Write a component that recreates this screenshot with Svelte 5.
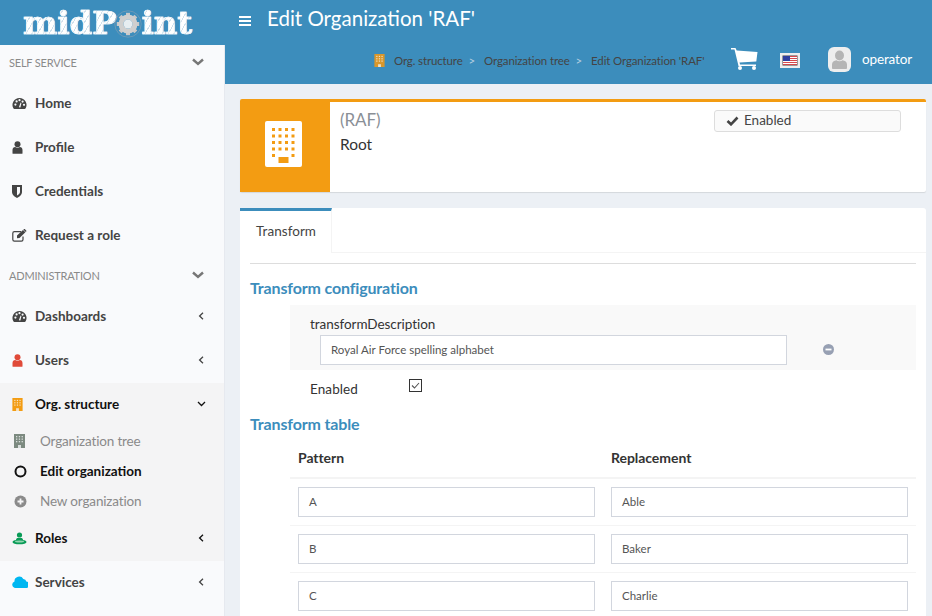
<script>
	const rows = [
		['A', 'Able'],
		['B', 'Baker'],
		['C', 'Charlie']
	];
	const teeth = [0, 45, 90, 135, 180, 225, 270, 315];
</script>

{#snippet chevronLeft()}
	<svg class="chev" width="6" height="8" viewBox="0 0 6 8"><path d="M5 .8 1.600 4 5 7.200" fill="none" stroke="currentColor" stroke-width="1.300"/></svg>
{/snippet}

{#snippet sectionChevron()}
	<svg class="section-chev" width="12" height="8" viewBox="0 0 12 8"><path d="m1 1.500 5 4.500 5-4.500" fill="none" stroke="currentColor" stroke-width="2.400"/></svg>
{/snippet}

{#snippet gauge(c)}
	<svg width="15" height="13" viewBox="0 0 15 13"><path fill={c} d="M7.500 1a7 7 0 0 0-6 10.600c.2.300.5.400.8.400h10.400c.3 0 .6-.1.8-.4A7 7 0 0 0 7.500 1z"/><g fill="#f9fafc"><circle cx="3.400" cy="7.600" r="1.100"/><circle cx="4.600" cy="4.400" r="1.100"/><circle cx="7.500" cy="3.200" r="1.100"/><circle cx="10.600" cy="4.600" r="1.100"/><circle cx="12" cy="7.800" r="1.100"/><path d="M6.900 10.200 8.600 5.600l.8.300-1 4.600z"/></g></svg>
{/snippet}

{#snippet person(c)}
	<svg width="11" height="13" viewBox="0 0 11 13"><circle cx="5.500" cy="3.200" r="3" fill={c}/><path fill={c} d="M.5 12.200V9c0-1.800 1.200-3 2.600-3 .7.500 1.500.8 2.400.8S7.200 6.500 7.900 6c1.400 0 2.600 1.200 2.600 3v3.200c0 .3-.3.6-.6.6H1.100c-.3 0-.6-.3-.6-.6z"/></svg>
{/snippet}

{#snippet building(c, w, h)}
	<svg width={w} height={h} viewBox="0 0 11 14"><rect width="11" height="14" fill={c}/><g fill="#f9fafc" opacity=".75"><rect x="2" y="2" width="1.300" height="1.300"/><rect x="4.800" y="2" width="1.300" height="1.300"/><rect x="7.600" y="2" width="1.300" height="1.300"/><rect x="2" y="4.500" width="1.300" height="1.300"/><rect x="4.800" y="4.500" width="1.300" height="1.300"/><rect x="7.600" y="4.500" width="1.300" height="1.300"/><rect x="2" y="7" width="1.300" height="1.300"/><rect x="4.800" y="7" width="1.300" height="1.300"/><rect x="7.600" y="7" width="1.300" height="1.300"/><rect x="4" y="11" width="3" height="3"/></g></svg>
{/snippet}

<div class="page">
	<header class="header">
		<div class="top">
			<div class="logo">
				<span class="logo-text">midP</span>
				<svg class="gear" width="28" height="28" viewBox="0 0 28 28">
					<circle cx="14" cy="14" r="13.200" fill="none" stroke="#7f9fb6" stroke-width=".7"/>
					{#each teeth as a}
						<rect x="12" y="2.800" width="4" height="4" fill="#c9c9c9" transform="rotate({a} 14 14)"/>
					{/each}
					<circle cx="14" cy="14" r="7" fill="none" stroke="#cfcfcf" stroke-width="5"/>
					<circle cx="14" cy="14" r="4.500" fill="#e6edf1"/>
				</svg>
				<span class="logo-text">int</span>
			</div>
			<span class="burger"><i></i><i></i><i></i></span>
			<h1>Edit Organization 'RAF'</h1>
		</div>
		<div class="sub">
			<nav class="crumbs">
				<span class="crumb-icon">{@render building('#d9972a', 11, 13)}</span>
				<span>Org. structure</span><b>&gt;</b>
				<span>Organization tree</span><b>&gt;</b>
				<span>Edit Organization 'RAF'</span>
			</nav>
			<svg class="cart" width="27" height="22" viewBox="0 0 27 22"><path fill="#fff" d="M0 0h4.500l1.200 2.500L26.500 4l-1.200 9.500L8.500 14.500l.6 2h15.900v1.500H7.500L3.500 1.500H0z"/><circle cx="9" cy="20" r="2" fill="#fff"/><circle cx="23" cy="20" r="2" fill="#fff"/></svg>
			<svg class="flag" width="20" height="15" viewBox="0 0 20 15"><rect width="20" height="15" fill="#eee"/><rect x="2.500" y="2.500" width="15" height="10" fill="#444"/><rect x="3" y="3" width="14" height="9" fill="#fff"/><path stroke="#d5484c" stroke-width="1" d="M3 3.500h14M3 5.500h14M3 7.500h14M3 9.500h14M3 11.500h14"/><rect x="3" y="3" width="7" height="5" fill="#2f3f9f"/></svg>
			<span class="avatar">
				<svg width="23" height="25" viewBox="0 0 23 25"><rect width="23" height="25" rx="6" fill="#eee"/><ellipse cx="11.500" cy="8.500" rx="4.500" ry="5" fill="#b5b5b5"/><path fill="#b5b5b5" d="M4 21v-3.500c0-2.500 2-4 4.500-4.200 1.800 1.200 4.200 1.200 6 0 2.500.2 4.500 1.700 4.500 4.200V21c0 .5-.4 1-1 1H5c-.6 0-1-.5-1-1z"/></svg>
			</span>
			<span class="user">operator</span>
		</div>
	</header>

	<div class="body">
		<aside class="sidebar">
			<div class="section"><span>SELF SERVICE</span>{@render sectionChevron()}</div>
			<a class="item"><span class="ic">{@render gauge('#444')}</span>Home</a>
			<a class="item"><span class="ic">{@render person('#444')}</span>Profile</a>
			<a class="item"><span class="ic"><svg width="10" height="13" viewBox="0 0 10 13"><path fill="#444" d="M0 0h10v7c0 3-3 5-5 6-2-1-5-3-5-6z"/><path fill="#f9fafc" d="M5 2h3v5c0 1.500-1.500 2.700-3 3.500z"/></svg></span>Credentials</a>
			<a class="item"><span class="ic"><svg width="15" height="13" viewBox="0 0 15 13"><path fill="none" stroke="#444" stroke-width="1.200" d="M9 2.600H2.400C1.400 2.600.8 3.200.8 4.200v6.400c0 1 .6 1.600 1.600 1.600h7c1 0 1.600-.6 1.600-1.600V7.500"/><path fill="#444" d="M5 6.500 11 .9l2.400 2.300L7.500 9 5 9.300zM11.800.3c.4-.4.900-.4 1.200 0l1.200 1.100c.3.300.3.800 0 1.100l-.4.400L11.400.7z"/></svg></span>Request a role</a>
			<div class="section"><span>ADMINISTRATION</span>{@render sectionChevron()}</div>
			<a class="item"><span class="ic">{@render gauge('#444')}</span>Dashboards{@render chevronLeft()}</a>
			<a class="item"><span class="ic">{@render person('#e04a39')}</span>Users{@render chevronLeft()}</a>
			<div class="group">
				<a class="item active"><span class="ic">{@render building('#f39c12', 11, 13)}</span>Org. structure
					<svg class="chev down" width="9" height="6" viewBox="0 0 9 6"><path d="m1 1 3.500 3.500L8 1" fill="none" stroke="currentColor" stroke-width="1.300"/></svg>
				</a>
				<a class="subitem"><span class="ic-sub">{@render building('#7c8a80', 11, 14)}</span>Organization tree</a>
				<a class="subitem current"><span class="ic-sub"><svg width="13" height="13" viewBox="0 0 13 13"><circle cx="6.500" cy="6.500" r="5" fill="none" stroke="#111" stroke-width="2"/></svg></span>Edit organization</a>
				<a class="subitem"><span class="ic-sub"><svg width="13" height="13" viewBox="0 0 13 13"><circle cx="6.500" cy="6.500" r="6" fill="#8a8a8a"/><path d="M6.500 3.500v6M3.500 6.500h6" stroke="#f4f4f5" stroke-width="1.800"/></svg></span>New organization</a>
				<a class="item active"><span class="ic"><svg width="15" height="13" viewBox="0 0 15 13"><circle cx="7.500" cy="3" r="2.600" fill="#0a9b57"/><path fill="#0a9b57" d="M4 10V7.800C4 6.500 5 6 6 6h3c1 0 2 .5 2 1.800V10z"/><ellipse cx="7.500" cy="10" rx="7" ry="2.300" fill="#0a9b57"/><ellipse cx="7.500" cy="9.600" rx="4.500" ry="1" fill="#8fd4ae"/></svg></span>Roles{@render chevronLeft()}</a>
			</div>
			<a class="item"><span class="ic"><svg width="16" height="12" viewBox="0 0 16 12"><path fill="#00b7f1" d="M3.500 12a3.400 3.400 0 0 1-1-6.600 4.700 4.700 0 0 1 8.800-2.500 3 3 0 0 1 3 2.500 3.300 3.300 0 0 1-1.300 6.600z"/></svg></span>Services{@render chevronLeft()}</a>
		</aside>

		<main class="main">
			<section class="summary">
				<div class="summary-icon">
					<svg width="37" height="46" viewBox="0 0 37 46">
						<rect width="37" height="46" rx="2" fill="#fff"/>
						<g fill="#f39c12">
							{#each [0, 1, 2, 3] as r}
								{#each [0, 1, 2, 3] as c}
									<rect x={7 + c * 6.500} y={7 + r * 6.500} width="3" height="3"/>
								{/each}
							{/each}
							<rect x="7" y="33" width="3" height="3"/>
							<rect x="26.500" y="33" width="3" height="3"/>
							<rect x="13.500" y="36" width="10" height="6"/>
						</g>
					</svg>
				</div>
				<div class="summary-text">
					<div class="raf">(RAF)</div>
					<div class="root">Root</div>
				</div>
				<div class="status"><svg width="13" height="10" viewBox="0 0 13 10"><path d="m1.500 5 3.500 3.300 6.500-6.800" fill="none" stroke="#444" stroke-width="2.600"/></svg><span>Enabled</span></div>
			</section>

			<section class="tabs-box">
				<div class="tabs">
					<div class="tab">Transform</div>
					<div class="tab-rest"></div>
				</div>
				<div class="content">
					<h2 class="title-config">Transform configuration</h2>
					<div class="panel">
						<div class="panel-label">transformDescription</div>
						<div class="panel-row">
							<div class="input wide"><span>Royal Air Force spelling alphabet</span></div>
							<svg class="minus" width="11" height="11" viewBox="0 0 11 11"><circle cx="5.500" cy="5.500" r="5.500" fill="#97a0b3"/><rect x="2.500" y="4.600" width="6" height="1.800" fill="#fff"/></svg>
						</div>
					</div>
					<div class="enabled">
						<span class="enabled-label">Enabled</span>
						<span class="check"><svg width="13" height="13" viewBox="0 0 13 13"><rect x=".5" y=".5" width="12" height="12" fill="#fff" stroke="#333"/><path d="m3 6.500 2.500 2.500 4.500-5" fill="none" stroke="#555" stroke-width="1.100"/></svg></span>
					</div>
					<h2>Transform table</h2>
					<div class="table">
						<div class="thead"><div>Pattern</div><div>Replacement</div></div>
						{#each rows as [pattern, replacement]}
							<div class="tr">
								<div class="input"><span>{pattern}</span></div>
								<div class="input"><span>{replacement}</span></div>
							</div>
						{/each}
					</div>
				</div>
			</section>
		</main>
	</div>
</div>

<style>
	:global(body) {
		margin: 0;
		background: #ecf0f5;
	}

	.page {
		width: 932px;
		height: 616px;
		overflow: hidden;
		font-family: Lato, "Liberation Sans", sans-serif;
		font-size: 13.5px;
		letter-spacing: -0.05px;
		color: #333;
		display: flex;
		flex-direction: column;
	}

	.header {
		background: #3c8dbc;
		height: 84px;
		flex: none;
	}

	.top {
		height: 45px;
		display: flex;
		align-items: center;
	}

	.logo {
		width: 224px;
		height: 45px;
		padding-left: 23px;
		box-sizing: border-box;
		display: flex;
		align-items: center;
		flex: none;
	}

	.logo-text {
		font-family: "DejaVu Serif", serif;
		font-weight: 700;
		font-size: 32.5px;
		line-height: 45px;
		letter-spacing: -0.1px;
		background: repeating-linear-gradient(120deg, #fff 0 4px, #cfe0eb 4px 5px);
		-webkit-background-clip: text;
		background-clip: text;
		color: transparent;
		-webkit-text-stroke: 0.7px #f4f8fb;
	}

	.gear {
		margin: 3px 0 0 -3px;
		flex: none;
	}

	.burger {
		margin-left: 15px;
		width: 12px;
		display: flex;
		flex-direction: column;
		gap: 2px;
		padding-bottom: 4px;
	}

	.burger i {
		display: block;
		height: 2px;
		background: #fff;
	}

	h1 {
		margin: 0 0 9px 16px;
		font-size: 20.5px;
		font-weight: 400;
		letter-spacing: 0;
		color: #fff;
	}

	.sub {
		height: 39px;
		display: flex;
		align-items: center;
		padding-left: 374px;
		padding-bottom: 9px;
		box-sizing: border-box;
	}

	.crumbs {
		display: flex;
		align-items: center;
		font-size: 11.5px;
		letter-spacing: -0.14px;
		color: #444;
		width: 357px;
		flex: none;
	}

	.crumbs b {
		font-weight: 400;
		color: #b5cfe0;
		margin: 0 9px 0 6px;
	}

	.crumb-icon {
		display: flex;
		margin-right: 9px;
	}

	.cart {
		flex: none;
		margin-bottom: 2px;
	}

	.flag {
		margin-left: 22px;
		flex: none;
	}

	.avatar {
		display: flex;
		margin-left: 28px;
		margin-bottom: 1px;
	}

	.user {
		margin-left: 11px;
		color: #fff;
		margin-bottom: 3px;
		letter-spacing: -0.15px;
	}

	.body {
		flex: 1;
		display: flex;
		min-height: 0;
	}

	.sidebar {
		width: 224px;
		flex: none;
		background: #f9fafc;
		margin-top: -39px;
		height: 571px;
		border-right: 1px solid #e6e9ef;
	}

	.section {
		height: 37px;
		padding: 0 20px 3px 9px;
		box-sizing: border-box;
		display: flex;
		align-items: center;
		justify-content: space-between;
		font-size: 11px;
		letter-spacing: -0.2px;
		color: #8a8a8a;
	}

	.section-chev {
		color: #777;
	}

	.item {
		height: 44px;
		box-sizing: border-box;
		padding: 0 0 2px 12px;
		display: flex;
		align-items: center;
		font-weight: 700;
		letter-spacing: 0;
		color: #444;
	}

	.item.active {
		color: #111;
	}

	.ic {
		width: 23px;
		display: flex;
		flex: none;
	}

	.chev {
		margin-left: auto;
		margin-right: 20px;
	}

	.chev.down {
		margin-right: 18px;
	}

	.group {
		background: #f4f4f5;
	}

	.subitem {
		height: 30px;
		box-sizing: border-box;
		padding: 0 0 2px 14px;
		display: flex;
		align-items: center;
		letter-spacing: -0.15px;
		color: #8a8a8a;
	}

	.subitem.current {
		color: #111;
		font-weight: 700;
		letter-spacing: 0;
	}

	.ic-sub {
		width: 26px;
		display: flex;
		flex: none;
	}

	.main {
		flex: 1;
		padding: 15px 6px 0 15px;
		min-width: 0;
	}

	.summary {
		height: 93px;
		box-sizing: border-box;
		background: #fff;
		border-top: 3px solid #f39c12;
		box-shadow: 0 1px 1px rgba(0, 0, 0, 0.1);
		display: flex;
		border-radius: 2px;
	}

	.summary-icon {
		width: 90px;
		background: #f39c12;
		display: flex;
		align-items: center;
		justify-content: center;
		padding: 0 3px 6px 0;
		box-sizing: border-box;
	}

	.summary-text {
		padding: 6px 0 0 10px;
		flex: 1;
	}

	.raf {
		font-size: 17px;
		line-height: 24px;
		color: #8a8f96;
	}

	.root {
		font-size: 15.5px;
		line-height: 24px;
		color: #333;
	}

	.status {
		width: 187px;
		height: 22px;
		box-sizing: border-box;
		margin: 8px 25px 0 0;
		background: #fafafa;
		border: 1px solid #ddd;
		border-radius: 3px;
		display: flex;
		align-items: center;
		gap: 5px;
		padding: 0 0 0 11px;
		letter-spacing: 0;
		color: #444;
	}

	.status span {
		margin-top: -3px;
	}

	.tabs-box {
		margin-top: 16px;
		background: #fff;
		height: 420px;
		border-radius: 3px 3px 0 0;
	}

	.tabs {
		display: flex;
		height: 45px;
	}

	.tab {
		width: 92px;
		box-sizing: border-box;
		border-top: 3px solid #3c8dbc;
		border-right: 1px solid #f4f4f4;
		padding: 12px 0 0 16px;
		letter-spacing: 0.05px;
		color: #444;
	}

	.tab-rest {
		flex: 1;
		border-bottom: 1px solid #f4f4f4;
	}

	.content {
		margin: 10px 10px 0;
		border-top: 1px solid #ddd;
	}

	h2 {
		margin: 0;
		font-size: 16px;
		font-weight: 700;
		letter-spacing: -0.15px;
		color: #3c8dbc;
		line-height: 20px;
	}

	.title-config {
		padding-top: 14px;
		padding-bottom: 7px;
	}

	.panel {
		margin: 0 0 0 40px;
		height: 65px;
		box-sizing: border-box;
		background: #f9f9f9;
		padding: 10px 0 0 20px;
	}

	.panel-label {
		line-height: 18px;
		color: #333;
	}

	.panel-row {
		display: flex;
		align-items: center;
		margin: 2px 0 0 10px;
	}

	.input {
		height: 30px;
		box-sizing: border-box;
		border: 1px solid #d2d6de;
		background: #fff;
		padding: 0 0 0 10px;
		display: flex;
		align-items: center;
		font-size: 11.5px;
		letter-spacing: 0;
		color: #555;
	}

	.input span {
		margin-top: -2px;
	}

	.wide {
		width: 467px;
		flex: none;
	}

	.minus {
		margin: -2px 0 0 36px;
	}

	.enabled {
		display: flex;
		align-items: flex-start;
		margin: 9px 0 0 60px;
		height: 35px;
		line-height: 20px;
		color: #333;
	}

	.enabled-label {
		width: 99px;
		letter-spacing: 0.1px;
	}

	.check {
		display: flex;
	}

	.table {
		margin: 14px 0 0 40px;
	}

	.thead {
		display: grid;
		grid-template-columns: 297px 297px;
		column-gap: 16px;
		padding: 0 8px;
		height: 31px;
		box-sizing: border-box;
		align-items: start;
		font-size: 14px;
		letter-spacing: -0.05px;
		font-weight: 700;
		color: #333;
		border-bottom: 2px solid #f4f4f4;
		line-height: 20px;
	}

	.tr {
		display: grid;
		grid-template-columns: 297px 297px;
		column-gap: 16px;
		padding: 8px;
		border-bottom: 1px solid #f4f4f4;
	}
</style>
